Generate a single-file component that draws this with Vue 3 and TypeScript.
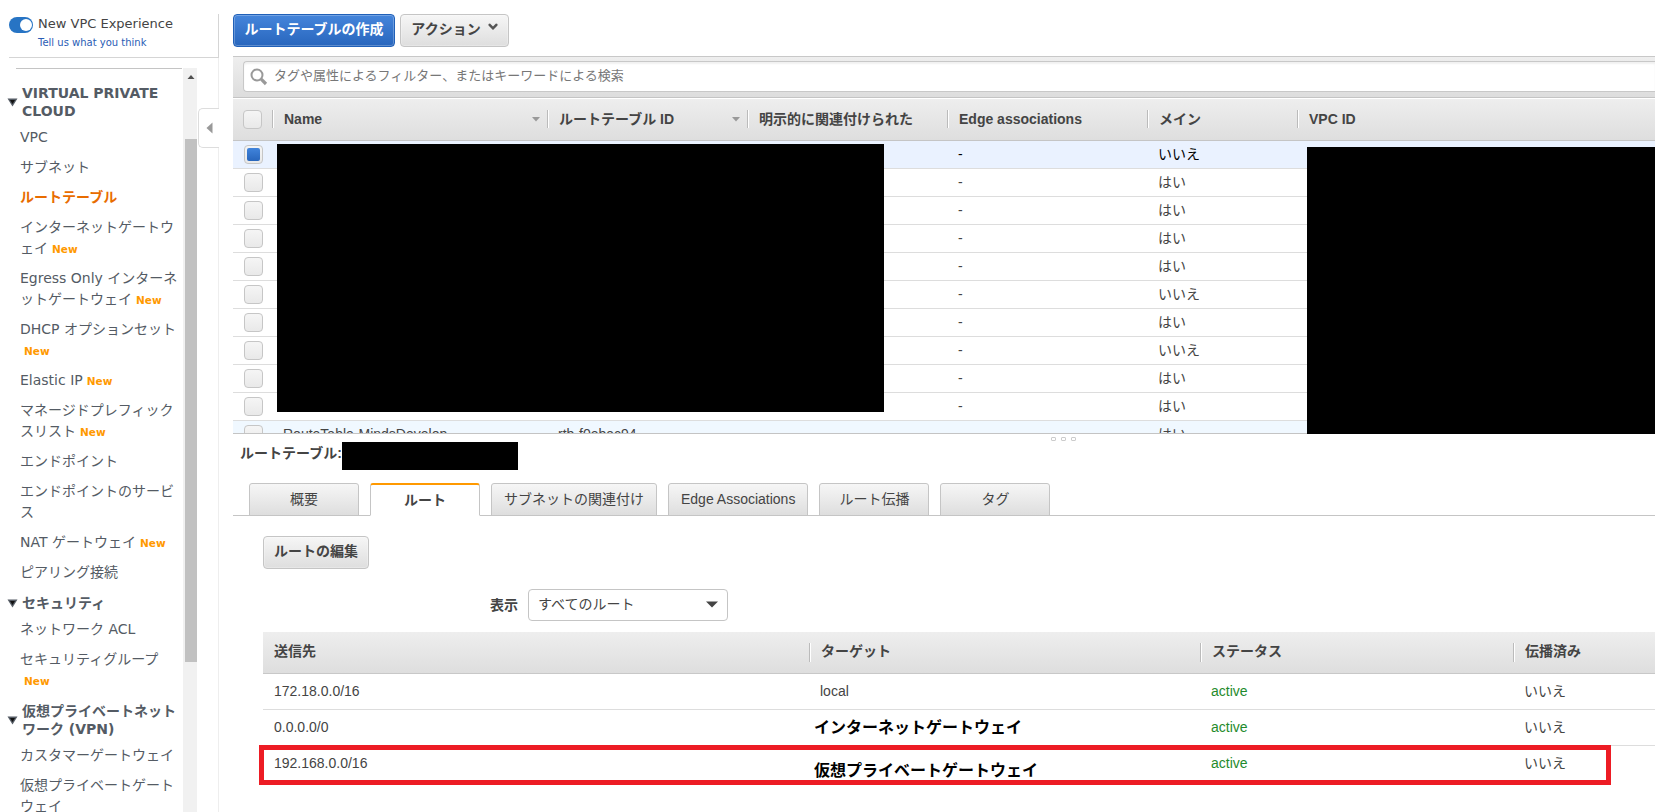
<script setup lang="ts">
interface NavItem {
  lines: string[]
  isNew?: boolean
  active?: boolean
}
interface NavGroup {
  title: string[]
  items: NavItem[]
}

const groups: NavGroup[] = [
  {
    title: ['VIRTUAL PRIVATE', 'CLOUD'],
    items: [
      { lines: ['VPC'] },
      { lines: ['サブネット'] },
      { lines: ['ルートテーブル'], active: true },
      { lines: ['インターネットゲートウ', 'ェイ'], isNew: true },
      { lines: ['Egress Only インターネ', 'ットゲートウェイ'], isNew: true },
      { lines: ['DHCP オプションセット', ''], isNew: true },
      { lines: ['Elastic IP'], isNew: true },
      { lines: ['マネージドプレフィック', 'スリスト'], isNew: true },
      { lines: ['エンドポイント'] },
      { lines: ['エンドポイントのサービ', 'ス'] },
      { lines: ['NAT ゲートウェイ'], isNew: true },
      { lines: ['ピアリング接続'] },
    ],
  },
  {
    title: ['セキュリティ'],
    items: [
      { lines: ['ネットワーク ACL'] },
      { lines: ['セキュリティグループ', ''], isNew: true },
    ],
  },
  {
    title: ['仮想プライベートネット', 'ワーク (VPN)'],
    items: [
      { lines: ['カスタマーゲートウェイ'] },
      { lines: ['仮想プライベートゲート', 'ウェイ'] },
    ],
  },
]

const columns = [
  { label: 'Name', sortable: true },
  { label: 'ルートテーブル ID', sortable: true },
  { label: '明示的に関連付けられた', sortable: false },
  { label: 'Edge associations', sortable: false },
  { label: 'メイン', sortable: false },
  { label: 'VPC ID', sortable: false },
]

const mainFlags = ['いいえ', 'はい', 'はい', 'はい', 'はい', 'いいえ', 'はい', 'いいえ', 'はい', 'はい', 'はい']
const rows = mainFlags.map((main, i) => ({
  name: i === 10 ? 'RouteTable-MindsDevelop' : '',
  id: i === 10 ? 'rtb-f0ebac94' : '',
  edge: i === 10 ? '' : '-',
  main,
  selected: i === 0,
  hover: i === 10,
}))

const tabs = ['概要', 'ルート', 'サブネットの関連付け', 'Edge Associations', 'ルート伝播', 'タグ']
const activeTab = 'ルート'

const routeColumns = ['送信先', 'ターゲット', 'ステータス', '伝播済み']
const routes = [
  { dest: '172.18.0.0/16', target: 'local', note: '' },
  { dest: '0.0.0.0/0', target: '', note: 'インターネットゲートウェイ' },
  { dest: '192.168.0.0/16', target: '', note: '仮想プライベートゲートウェイ' },
]
</script>

<template>
  <div class="page">
    <aside class="sidebar">
      <div class="experience">
        <span class="toggle"><i></i></span>
        <div>
          <div class="exp-title">New VPC Experience</div>
          <div class="exp-link">Tell us what you think</div>
        </div>
      </div>
      <div class="side-body">
        <nav class="nav">
          <section v-for="g in groups" :key="g.title[0]" class="group">
            <h3 class="group-title">
              <svg width="11" height="9" viewBox="0 0 11 9"><path d="M0.5 0.5h10L5.5 8.5z" fill="#545b64" /><path d="M3 2h5L5.5 6z" fill="#111" /></svg>
              <span><span v-for="t in g.title" :key="t" class="line">{{ t }}</span></span>
            </h3>
            <ul>
              <li v-for="item in g.items" :key="item.lines[0]" :class="{ active: item.active }">
                <span v-for="(l, i) in item.lines" :key="i" class="line">{{ l }}<b v-if="item.isNew && i === item.lines.length - 1" class="new">New</b></span>
              </li>
            </ul>
          </section>
        </nav>
        <div class="scrollbar">
          <svg width="14" height="18" viewBox="0 0 14 18"><path d="M4.5 11h7L8 7z" fill="#505050" /></svg>
          <div class="thumb"></div>
        </div>
        <div class="gutter">
          <div class="collapse"><svg width="7" height="12" viewBox="0 0 7 12"><path d="M6.5 0.5v11L0.5 6z" fill="#999" /></svg></div>
        </div>
      </div>
    </aside>

    <main class="main">
      <div class="toolbar">
        <button class="btn primary">ルートテーブルの作成</button>
        <button class="btn action">アクション<svg width="10" height="8" viewBox="0 0 10 8"><path d="M0.5 1l1.5-.5 3 3 3-3 1.500.5v1.500L5 7 .5 2.500z" fill="#555" /></svg></button>
      </div>

      <div class="filter">
        <div class="search">
          <svg width="18" height="18" viewBox="0 0 18 18"><circle cx="7" cy="7" r="5.500" fill="none" stroke="#999" stroke-width="2" /><path d="M11.200 11.200l4.800 4.800" stroke="#999" stroke-width="3.200" stroke-linecap="butt" /></svg>
          <span>タグや属性によるフィルター、またはキーワードによる検索</span>
        </div>
      </div>

      <div class="grid-area">
        <div class="cols head">
          <div class="check-cell"><span class="check"></span></div>
          <div v-for="c in columns" :key="c.label" class="th">
            {{ c.label }}
            <svg v-if="c.sortable" width="8" height="5" viewBox="0 0 8 5"><path d="M0 0h8L4 4.500z" fill="#999" /></svg>
          </div>
        </div>
        <div class="rows">
          <div v-for="(r, i) in rows" :key="i" class="cols row" :class="{ selected: r.selected, hover: r.hover }">
            <div class="check-cell"><span class="check"><i v-if="r.selected"></i></span></div>
            <div>{{ r.name }}</div>
            <div>{{ r.id }}</div>
            <div></div>
            <div>{{ r.edge }}</div>
            <div>{{ r.main }}</div>
            <div></div>
          </div>
        </div>
        <div class="mask mask-left"></div>
        <div class="mask mask-right"></div>
      </div>

      <div class="splitter"><i></i><i></i><i></i></div>

      <div class="detail-title">ルートテーブル:<span class="redacted"></span></div>

      <div class="tabs">
        <div v-for="t in tabs" :key="t" class="tab" :class="{ current: t === activeTab }">{{ t }}</div>
      </div>

      <div class="panel">
        <button class="btn edit">ルートの編集</button>
        <div class="show">
          <label>表示</label>
          <div class="select">すべてのルート<svg width="12" height="7" viewBox="0 0 12 7"><path d="M0 0.500h12L6 6.500z" fill="#444" /></svg></div>
        </div>
        <div class="routes">
          <div class="route-cols route-head">
            <div v-for="c in routeColumns" :key="c" class="rth">{{ c }}</div>
          </div>
          <div v-for="r in routes" :key="r.dest" class="route-cols route">
            <div>{{ r.dest }}</div>
            <div><span v-if="r.note" class="note">{{ r.note }}</span><template v-else>{{ r.target }}</template></div>
            <div class="ok">active</div>
            <div>いいえ</div>
          </div>
          <div class="highlight"></div>
        </div>
      </div>
    </main>
  </div>
</template>

<style>
body {
  background: #fff;
  overflow: hidden;
}
</style>

<style scoped>
* {
  box-sizing: border-box;
}
.page {
  display: flex;
  width: 1655px;
  height: 812px;
  overflow: hidden;
  font: 14px/20px 'Liberation Sans', 'Noto Sans CJK JP', sans-serif;
  color: #444;
}
.sidebar {
  width: 219px;
  flex: none;
  margin-right: 14px;
  padding-top: 14px;
  display: flex;
  flex-direction: column;
  font-family: 'DejaVu Sans', 'Noto Sans CJK JP', sans-serif;
  color: #545b64;
}
.experience {
  height: 44px;
  margin-left: 9px;
  border-right: 1px solid #d5d5d5;
  border-bottom: 1px solid #d5d5d5;
  display: flex;
  gap: 5px;
  white-space: nowrap;
}
.toggle {
  width: 24px;
  height: 16px;
  margin-top: 3px;
  border-radius: 8px;
  background: #2774c4;
  padding: 2px;
}
.toggle i {
  display: block;
  width: 12px;
  height: 12px;
  margin-left: 9px;
  border-radius: 50%;
  background: #fff;
}
.exp-title {
  font-size: 13px;
  line-height: 20px;
  color: #444;
}
.exp-link {
  font-size: 10px;
  line-height: 17px;
  color: #2a5db5;
}
.side-body {
  flex: 1;
  min-height: 0;
  display: flex;
  padding-top: 10px;
}
.nav {
  width: 166px;
  margin-left: 16px;
  border-top: 1px solid #c4c4c4;
  padding-top: 15px;
  white-space: nowrap;
}
.line {
  display: block;
}
.group-title {
  margin: 0 0 0 -9px;
  display: flex;
  align-items: center;
  font-size: 14px;
  line-height: 18px;
}
.group-title svg {
  margin-right: 4px;
  flex: none;
}
ul {
  list-style: none;
  margin: 7px 0 11px;
  padding: 0 0 0 4px;
}
li {
  line-height: 21px;
  margin-bottom: 9px;
}
li .line {
  height: 21px;
}
li.active {
  color: #e86c00;
  font-weight: bold;
}
.new {
  font-size: 10.500px;
  color: #f90;
  margin-left: 4px;
}
.scrollbar {
  width: 14px;
  margin-left: 1px;
  background: #f1f1f1;
}
.scrollbar svg {
  display: block;
  margin-bottom: 53px;
}
.thumb {
  height: 523px;
  margin-left: 2px;
  background: #c1c1c1;
}
.gutter {
  width: 22px;
  border-right: 1px solid #eee;
  margin-top: -10px;
  padding: 50px 0 0 1px;
}
.collapse {
  width: 21px;
  height: 40px;
  border: 1px solid #ddd;
  border-right: 0;
  border-radius: 5px 0 0 5px;
  background: #fff;
  display: flex;
  align-items: center;
  padding-left: 7px;
}
.main {
  flex: 1;
  min-width: 0;
}
.toolbar {
  height: 56px;
  padding-top: 14px;
  display: flex;
  gap: 5px;
}
.btn {
  height: 33px;
  padding: 0 0 3px;
  border: 1px solid #c5c5c5;
  border-radius: 4px;
  background: linear-gradient(#f6f6f6, #dedede);
  font: bold 14px/20px 'Liberation Sans', 'Noto Sans CJK JP', sans-serif;
  color: #444;
  box-shadow: inset 0 0 0 1px rgba(255, 255, 255, 0.25);
  white-space: nowrap;
}
.primary {
  width: 162px;
  color: #fff;
  border-color: #2060b8;
  background: linear-gradient(#4585db, #2866bd);
}
.action {
  width: 109px;
}
.action svg {
  margin-left: 7px;
  vertical-align: 3px;
}
.filter {
  height: 42px;
  border-top: 1px solid #c8c8c8;
  border-bottom: 1px solid #c4c4c4;
  background: linear-gradient(#eee, #ddd);
  padding: 4px 0 0 10px;
}
.search {
  height: 31px;
  border: 1px solid #c8c8c8;
  border-right: 0;
  border-radius: 4px 0 0 4px;
  background: #fff;
  box-shadow: inset 0 2px 2px rgba(0, 0, 0, 0.06);
  display: flex;
  align-items: center;
  padding-left: 6px;
  font-size: 13px;
  color: #777;
}
.search svg {
  margin-right: 6px;
}
.search span {
  padding-bottom: 2px;
}
.grid-area {
  position: relative;
}
.cols {
  display: grid;
  grid-template-columns: 39px 275px 200px 200px 200px 150px 1fr;
}
.head {
  height: 43px;
  border-top: 1px solid #fff;
  border-bottom: 1px solid #c5c5c5;
  background: linear-gradient(#eee, #dedede);
  align-items: center;
  font-weight: bold;
  padding-bottom: 1px;
}
.th {
  height: 18px;
  line-height: 18px;
  border-left: 1px solid #bbb;
  box-shadow: inset 1px 0 #fff;
  padding: 0 7px 0 11px;
  display: flex;
  align-items: center;
  justify-content: space-between;
}
.check-cell {
  padding-left: 11px;
}
.head .check-cell {
  padding-left: 10px;
}
.check {
  display: block;
  width: 19px;
  height: 19px;
  border: 1px solid #c6c6c6;
  border-radius: 4px;
  background: linear-gradient(#f5f5f5, #e9e9e9);
  padding: 2px;
}
.check i {
  display: block;
  width: 13px;
  height: 13px;
  border-radius: 2px;
  background: linear-gradient(#4184dc, #2866bc);
}
.rows {
  height: 293px;
  overflow: hidden;
  border-bottom: 1px solid #c4c4c4;
}
.row {
  height: 28px;
  border-bottom: 1px solid #ddd;
  align-items: center;
}
.row > div + div {
  padding: 0 0 1px 11px;
}
.selected {
  background: #eaf2ff;
  color: #000;
}
.hover {
  background: #f0f8ff;
}
.mask {
  position: absolute;
  background: #000;
}
.mask-left {
  left: 44px;
  top: 46px;
  width: 607px;
  height: 268px;
}
.mask-right {
  left: 1074px;
  top: 49px;
  right: 0;
  bottom: 0;
}
.splitter {
  height: 8px;
  padding: 3px 0 0 818px;
  display: flex;
  gap: 5px;
}
.splitter i {
  width: 5px;
  height: 4px;
  border: 1px solid #ccc;
  border-radius: 1px;
}
.detail-title {
  height: 41px;
  padding-left: 7px;
  display: flex;
  font-weight: bold;
  line-height: 22px;
}
.redacted {
  width: 176px;
  height: 28px;
  background: #000;
  margin: 0;
}
.tabs {
  height: 33px;
  border-bottom: 1px solid #c5c5c5;
  padding-left: 16px;
  display: flex;
  gap: 11px;
}
.tab {
  min-width: 110px;
  height: 33px;
  padding: 0 12px;
  border: 1px solid #c5c5c5;
  border-radius: 3px 3px 0 0;
  background: linear-gradient(#f6f6f6, #dedede);
  text-align: center;
  line-height: 31px;
}
.current {
  border-top: 2px solid #f90;
  border-bottom-color: #fff;
  background: #fff;
  font-weight: bold;
}
.panel {
  padding: 20px 0 0 30px;
}
.edit {
  display: block;
  width: 106px;
}
.show {
  margin-top: 20px;
  padding-left: 227px;
  display: flex;
  align-items: center;
  gap: 10px;
}
.show label {
  font-weight: bold;
}
.select {
  width: 200px;
  height: 32px;
  border: 1px solid #c5c5c5;
  border-radius: 4px;
  padding: 0 9px 2px 9px;
  display: flex;
  align-items: center;
  justify-content: space-between;
}
.routes {
  position: relative;
  margin-top: 11px;
}
.route-cols {
  display: grid;
  grid-template-columns: 546px 391px 313px 1fr;
}
.route-head {
  height: 42px;
  border-bottom: 1px solid #c8c8c8;
  background: linear-gradient(#eee, #dedede);
  align-items: center;
  font-weight: bold;
}
.rth {
  height: 19px;
  line-height: 17px;
  padding-left: 11px;
  border-left: 1px solid #bbb;
  box-shadow: inset 1px 0 #fff;
}
.rth:first-child {
  border-left: 0;
  box-shadow: none;
}
.route {
  height: 36px;
  line-height: 34px;
  border-bottom: 1px solid #ddd;
}
.route:nth-child(4) {
  border-bottom: 0;
}
.route > div {
  padding-left: 11px;
}
.ok {
  color: #1f8b2d;
}
.note {
  display: block;
  margin-left: -6px;
  font-weight: bold;
  font-size: 16px;
  line-height: 36px;
  color: #000;
}
.route:nth-child(4) .note {
  padding-top: 7px;
}
.highlight {
  position: absolute;
  left: -4px;
  top: 113px;
  width: 1352px;
  height: 40px;
  border: 5px solid #ed1c24;
}
</style>
